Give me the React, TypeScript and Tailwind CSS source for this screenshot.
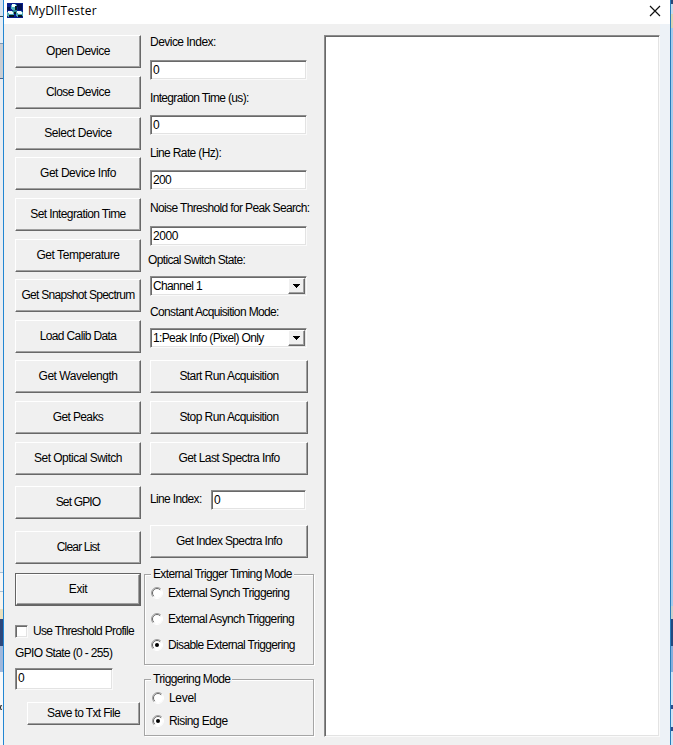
import type { ReactNode } from 'react';

const raised =
  'flex shrink-0 items-center justify-center whitespace-nowrap bg-[#f0f0f0] border border-t-white border-l-white border-r-[#686868] border-b-[#686868] shadow-[inset_-1px_-1px_0_#a0a0a0]';
const sunken =
  'flex shrink-0 items-center whitespace-nowrap bg-white border border-t-[#8c8c8c] border-l-[#8c8c8c] border-r-[#fafafa] border-b-[#fafafa] shadow-[inset_1px_1px_0_#696969,inset_-1px_-1px_0_#e3e3e3]';

function Button({ children, className }: { children: ReactNode; className: string }) {
  return <button className={`${raised} pb-[2px] ${className}`}>{children}</button>;
}

function Label({ children, className }: { children: ReactNode; className: string }) {
  return <div className={`h-4 shrink-0 whitespace-nowrap leading-4 ${className}`}>{children}</div>;
}

function Field({ children, className }: { children: ReactNode; className: string }) {
  return <div className={`${sunken} pl-[2px] ${className}`}>{children}</div>;
}

function Combo({ children, className }: { children: ReactNode; className: string }) {
  return (
    <div className={`${sunken} w-[157px] justify-between pl-[2px] ${className}`}>
      <span>{children}</span>
      <span className="flex h-full items-center py-px pr-px">
        <span className={`${raised} h-full w-[17px]`}>
          <svg width="7" height="4" viewBox="0 0 7 4" shapeRendering="crispEdges">
            <path d="M0 0h7v1H6v1H5v1H4v1H3V3H2V2H1V1H0z" fill="#000" />
          </svg>
        </span>
      </span>
    </div>
  );
}

function Radio({ children, checked, className }: { children: ReactNode; checked?: boolean; className: string }) {
  return (
    <div className={`flex h-4 items-center whitespace-nowrap ${className}`}>
      <svg width="12" height="12" viewBox="0 0 12 12" className="shrink-0">
        <circle cx="6" cy="6" r="5" fill="#fff" />
        <path d="M2.1 9.9A5.5 5.5 0 0 1 9.9 2.1" fill="none" stroke="#a0a0a0" />
        <path d="M2.8 9.2A4.5 4.5 0 0 1 9.2 2.8" fill="none" stroke="#696969" />
        <path d="M2.1 9.9A5.5 5.5 0 0 0 9.9 2.1" fill="none" stroke="#fff" />
        {checked && <circle cx="6" cy="6" r="2" fill="#000" />}
      </svg>
      <span className="ml-[5px]">{children}</span>
    </div>
  );
}

function Group({ title, children, className }: { title: string; children: ReactNode; className: string }) {
  return (
    <div className={`-ml-[6px] w-[170px] shrink-0 border border-[#a5a5a5] shadow-[inset_1px_1px_0_#fff,1px_1px_0_#fff] ${className}`}>
      <div className="-mt-[9px] ml-[6px] h-4 w-fit whitespace-nowrap bg-[#f0f0f0] px-[2px] leading-4">{title}</div>
      {children}
    </div>
  );
}

function AppIcon() {
  return (
    <svg width="16" height="15" viewBox="0 0 16 15" shapeRendering="crispEdges">
      <path d="M0 0h16v15H0z" fill="#0a1f8c" />
      <path d="M10 1h5v6h-4V4h-1zM0 4h3v3H0z" fill="#00104f" />
      <path d="M6 5h4v4H6z" fill="#2c7f8e" />
      <path d="M5 1h4v1h1v4H9v1H5V6H4V2h1z" fill="#4fb4c0" />
      <path d="M5 1h3v1h1v2H5z" fill="#effcff" />
      <path d="M8 3h2v4H8z" fill="#052028" />
      <path d="M1 8h5v1h1v4H6v1H1v-1H0V9h1z" fill="#4fa9b6" />
      <path d="M1 8h4v1h1v2H2v-1H1z" fill="#effcff" />
      <path d="M2 12h5v2H2z" fill="#04161c" />
      <path d="M10 8h5v1h1v4h-1v1h-5v-1H9V9h1z" fill="#4fa9b6" />
      <path d="M10 8h4v1h1v2h-4v-1h-1z" fill="#effcff" />
      <path d="M11 12h4v2h-4zM7 9h2v2H7z" fill="#04161c" />
    </svg>
  );
}

export default function App() {
  return (
    <div className="flex h-[745px] w-[673px] overflow-hidden bg-[#f0f0f0] font-['Liberation_Sans',Arial,sans-serif] text-[12px] tracking-[-0.64px] text-black">
      <div className="flex w-[3px] shrink-0 flex-col">
        <div className="h-[16px] bg-[#d8e2ee]" />
        <div className="h-px bg-[#334a5c]" />
        <div className="h-[26px] bg-[#e5edf5]" />
        <div className="h-px bg-[#7d98b4]" />
        <div className="h-[34px] bg-[#c9cdd3]" />
        <div className="h-px bg-[#46638c]" />
        <div className="h-[493px] bg-[#e9edf2]" />
        <div className="h-px bg-[#a8bfd4]" />
        <div className="h-[18px] bg-[#f5f5f5]" />
        <div className="h-px bg-[#a8bfd4]" />
        <div className="h-[17px] bg-[#f7f4ee]" />
        <div className="h-[10px] bg-[#eadfbd]" />
        <div className="h-[27px] bg-[#2c477c]" />
        <div className="h-[26px] bg-[#9eb7dc]" />
        <div className="h-[33px] bg-[#f7f8fa]" />
        <div className="h-[5px] w-[2px] rounded-l border border-r-0 border-[#303030]" />
        <div className="flex-1 bg-[#f3f5f8]" />
      </div>
      <div className="w-px shrink-0 bg-[#2286d2]" />
      <div className="flex w-[666px] shrink-0 flex-col">
        <header className="flex h-6 shrink-0 items-start justify-between bg-white pl-[3px] pr-[9px]">
          <div className="flex items-start pt-[3px]">
            <AppIcon />
            <h1 className="-mt-px ml-[5px] font-['Open_Sans',sans-serif] text-[12px] leading-[18px] tracking-[0.2px]">MyDllTester</h1>
          </div>
          <svg width="12" height="12" viewBox="0 0 12 12" className="mt-[5px]">
            <path d="M1 1l10 10M11 1L1 11" stroke="#111" strokeWidth="1.2" />
          </svg>
        </header>
        <main className="flex min-h-0 flex-1 pl-[11px]">
          <section className="flex w-[126px] shrink-0 flex-col pt-[11px]">
            <Button className="h-[33px] tracking-[-0.5px]">Open Device</Button>
            <Button className="mt-2 h-[33px] tracking-[-0.55px]">Close Device</Button>
            <Button className="mt-2 h-[33px] tracking-[-0.45px]">Select Device</Button>
            <Button className="mt-[7px] h-[33px] tracking-[-0.45px]">Get Device Info</Button>
            <Button className="mt-2 h-[33px] tracking-[-0.6px]">Set Integration Time</Button>
            <Button className="mt-2 h-[33px] tracking-[-0.45px]">Get Temperature</Button>
            <Button className="mt-[7px] h-[33px] tracking-[-0.71px]">Get Snapshot Spectrum</Button>
            <Button className="mt-2 h-[33px]">Load Calib Data</Button>
            <Button className="mt-[7px] h-[33px] tracking-[-0.48px]">Get Wavelength</Button>
            <Button className="mt-2 h-[33px]">Get Peaks</Button>
            <Button className="mt-2 h-[33px] tracking-[-0.53px]">Set Optical Switch</Button>
            <Button className="mt-[11px] h-[33px] tracking-[-0.85px]">Set GPIO</Button>
            <Button className="mt-3 h-[33px] tracking-[-0.8px]">Clear List</Button>
            <div className="mt-[9px] flex border border-[#646464]">
              <Button className="h-[31px] w-full tracking-[-0.4px]">Exit</Button>
            </div>
            <div className="mt-[17px] flex h-4 items-center whitespace-nowrap">
              <span className={`${sunken} h-[13px] w-[13px]`} />
              <span className="ml-[5px] tracking-[-0.67px]">Use Threshold Profile</span>
            </div>
            <Label className="mt-[6px]">GPIO State (0 - 255)</Label>
            <Field className="mt-[7px] h-[22px] w-[98px] pb-[2px]">0</Field>
            <Button className="ml-3 mt-[12px] h-[23px] w-[113px]">Save to Txt File</Button>
          </section>

          <section className="ml-[9px] flex w-[174px] shrink-0 flex-col pt-[10px]">
            <Label className="tracking-[-0.53px]">Device Index:</Label>
            <Field className="mt-[10px] h-5 w-[157px]">0</Field>
            <Label className="mt-[10px] tracking-[-0.67px]">Integration Time (us):</Label>
            <Field className="mt-[9px] h-5 w-[157px]">0</Field>
            <Label className="mt-[10px]">Line Rate (Hz):</Label>
            <Field className="mt-[9px] h-5 w-[157px]">200</Field>
            <Label className="mt-[10px]">Noise Threshold for Peak Search:</Label>
            <Field className="mt-[10px] h-5 w-[157px] tracking-[-0.4px]">2000</Field>
            <Label className="-ml-[2px] mt-[6px]">Optical Switch State:</Label>
            <Combo className="mt-[8px] h-5">Channel 1</Combo>
            <Label className="mt-[8px]">Constant Acquisition Mode:</Label>
            <Combo className="mt-[8px] h-5">1:Peak Info (Pixel) Only</Combo>
            <Button className="mt-3 h-[33px] w-[158px] tracking-[-0.58px]">Start Run Acquisition</Button>
            <Button className="mt-2 h-[33px] w-[158px] tracking-[-0.58px]">Stop Run Acquisition</Button>
            <Button className="mt-2 h-[33px] w-[158px] tracking-[-0.58px]">Get Last Spectra Info</Button>
            <div className="mt-[15px] flex h-5 items-center">
              <Label className="mb-[2px] w-[61px]">Line Index:</Label>
              <Field className="h-5 w-[95px]">0</Field>
            </div>
            <Button className="mt-[15px] h-[33px] w-[158px]">Get Index Spectra Info</Button>
            <Group title="External Trigger Timing Mode" className="mt-[16px] h-[91px]">
              <Radio className="ml-[6px] mt-[3px]">External Synch Triggering</Radio>
              <Radio className="ml-[6px] mt-[10px]">External Asynch Triggering</Radio>
              <Radio className="ml-[6px] mt-[10px]" checked>Disable External Triggering</Radio>
            </Group>
            <Group title="Triggering Mode" className="mt-[14px] h-[57px]">
              <Radio className="ml-[7px] mt-[3px] tracking-[-0.3px]">Level</Radio>
              <Radio className="ml-[7px] mt-[7px] tracking-[-0.56px]" checked>Rising Edge</Radio>
            </Group>
          </section>

          <section className="pt-[11px]">
            <div className={`${sunken} h-[702px] w-[336px]`} />
          </section>
          <div className="ml-auto w-[10px] bg-[#edf2f7]" />
        </main>
      </div>
      <div className="w-px shrink-0 bg-[#287bb9]" />
      <div className="flex w-[2px] shrink-0 flex-col">
        <div className="h-[4px] bg-[#294777]" />
        <div className="h-[10px] bg-[#c5d9ea]" />
        <div className="h-[14px] bg-[#d9d3b2]" />
        <div className="h-[578px] bg-[#a4cbed]" />
        <div className="h-[13px] bg-[#c9d0cc]" />
        <div className="h-[27px] bg-[#204880]" />
        <div className="h-[26px] bg-[#83aede]" />
        <div className="h-[33px] bg-[#cfe4f6]" />
        <div className="h-[4px] bg-[#294d8d]" />
        <div className="h-[18px] bg-[#cfe4f6]" />
        <div className="h-[4px] bg-[#294d8d]" />
        <div className="flex-1 bg-[#cfe4f6]" />
      </div>
    </div>
  );
}
